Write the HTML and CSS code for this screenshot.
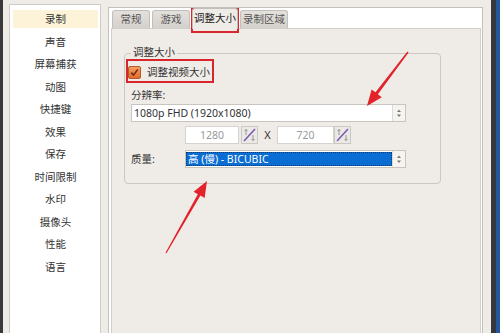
FILE: index.html
```html
<!DOCTYPE html>
<html lang="zh-CN">
<head>
<meta charset="utf-8">
<title>调整大小</title>
<link rel="stylesheet" href="styles.css">
</head>
<body>
<div class="screen">
  <div class="edge-l"></div>
  <div class="win">
    <nav class="side">
      <div class="item current">录制</div>
      <div class="item">声音</div>
      <div class="item">屏幕捕获</div>
      <div class="item">动图</div>
      <div class="item">快捷键</div>
      <div class="item">效果</div>
      <div class="item">保存</div>
      <div class="item">时间限制</div>
      <div class="item">水印</div>
      <div class="item">摄像头</div>
      <div class="item">性能</div>
      <div class="item">语言</div>
    </nav>
    <div class="tabs">
      <div class="tabbar">
        <div class="tab t2">常规</div>
        <div class="tab t2">游戏</div>
        <div class="tab t4 active">调整大小</div>
        <div class="tab t4b">录制区域</div>
      </div>
      <div class="pane">
        <fieldset class="group">
          <legend>调整大小</legend>
          <div class="chk-row">
            <span class="chk"><svg width="13" height="13" viewBox="0 0 13 13"><defs><linearGradient id="og" x1="0" y1="0" x2="0" y2="1"><stop offset="0" stop-color="#f4a266"/><stop offset="1" stop-color="#e0692c"/></linearGradient></defs><rect x="0.5" y="0.5" width="12" height="12" rx="1.5" fill="url(#og)" stroke="#b9592a"/><path d="M3.2 6.6 L5.5 9 L9.8 3.6" fill="none" stroke="#7a2e0c" stroke-width="1.6"/></svg></span>
            <span class="chk-lbl">调整视频大小</span>
          </div>
          <div class="lbl">分辨率:</div>
          <div class="sel sel-wide">
            <span class="val">1080p FHD (1920x1080)</span>
            <span class="spin"><svg width="12" height="16" viewBox="0 0 12 16"><polygon points="4,7 6,4.5 8,7" fill="#777"/><polygon points="4,9.5 6,12 8,9.5" fill="#777"/></svg></span>
          </div>
          <div class="size-row">
            <div class="num n1">1280</div>
            <div class="lockbtn"><svg width="15" height="16" viewBox="0 0 15 16"><line x1="2" y1="14" x2="13" y2="2" stroke="#7c58b0" stroke-width="1.6"/><path d="M4 8 V2.5 M2.5 4 L4 2.5 L5.5 4" fill="none" stroke="#8a8a8a" stroke-width="0.9"/><path d="M11 8 V13.5 M9.5 12 L11 13.5 L12.5 12" fill="none" stroke="#8a8a8a" stroke-width="0.9"/></svg></div>
            <div class="x">X</div>
            <div class="num n2">720</div>
            <div class="lockbtn"><svg width="15" height="16" viewBox="0 0 15 16"><line x1="2" y1="14" x2="13" y2="2" stroke="#7c58b0" stroke-width="1.6"/><path d="M4 8 V2.5 M2.5 4 L4 2.5 L5.5 4" fill="none" stroke="#8a8a8a" stroke-width="0.9"/><path d="M11 8 V13.5 M9.5 12 L11 13.5 L12.5 12" fill="none" stroke="#8a8a8a" stroke-width="0.9"/></svg></div>
          </div>
          <div class="q-row">
            <div class="lbl q">质量:</div>
            <div class="sel sel-q">
              <span class="val hl">高 (慢) - BICUBIC</span>
              <span class="spin"><svg width="12" height="16" viewBox="0 0 12 16"><polygon points="4,7 6,4.5 8,7" fill="#777"/><polygon points="4,9.5 6,12 8,9.5" fill="#777"/></svg></span>
            </div>
          </div>
        </fieldset>
      </div>
    </div>
  </div>
  <div class="edge-r"><div class="dark"></div><div class="blue"></div></div>
</div>
<svg class="annot" width="500" height="333" viewBox="0 0 500 333">
  <rect x="192" y="9" width="46" height="23" fill="none" stroke="#d8262c" stroke-width="2"/>
  <rect x="127" y="60" width="86" height="22" fill="none" stroke="#d8262c" stroke-width="2"/>
  <polygon points="408.6,52.4 377.9,94.2 381.8,97.2 367,106 371.6,89.4 375.5,92.3 407.4,51.6" fill="#e3232b"/>
  <polygon points="166.5,253.3 200.4,195.6 204.6,198.1 207,181 193.6,191.7 197.8,194.2 165.5,252.7" fill="#e3232b"/>
</svg>
</body>
</html>
```

FILE: styles.css
```css
html, body {
  margin: 0;
  padding: 0;
}
body {
  width: 500px;
  height: 333px;
  overflow: hidden;
  background: #efebe7;
  font-family: "Noto Sans", "Noto Sans CJK SC", sans-serif;
  font-size: 10.5px;
  color: #333;
  position: relative;
}
.screen {
  display: flex;
  height: 333px;
  overflow: hidden;
}
.edge-l {
  width: 3px;
  background: #3a3a3a;
  flex: none;
}
.win {
  width: 480px;
  flex: none;
  display: flex;
  align-items: flex-start;
  padding-left: 6px;
  box-sizing: border-box;
}
.side {
  margin-top: 4px;
  width: 92px;
  height: 360px;
  box-sizing: border-box;
  flex: none;
  background: #fff;
  border: 1px solid #cfcbc6;
  padding: 5px 2px 0 3px;
}
.item {
  height: 18px;
  line-height: 18px;
  margin-bottom: 4.5px;
  text-align: center;
  color: #333;
}
.item.current {
  background: #fcf3d8;
}
.tabs {
  margin-left: 7px;
  margin-top: 7px;
  width: 375px;
  height: 340px;
  box-sizing: border-box;
  flex: none;
  border: 1px solid #c4c0bb;
  background: #fff;
  display: flex;
  flex-direction: column;
}
.tabbar {
  height: 20px;
  display: flex;
  align-items: flex-end;
  padding-left: 3px;
  gap: 2px;
  flex: none;
}
.tab {
  height: 18px;
  line-height: 17px;
  box-sizing: border-box;
  text-align: center;
  color: #555;
  background: linear-gradient(#e4e1dd, #d4d0cb);
  border: 1px solid #c2beb9;
  border-bottom: none;
  border-radius: 3px 3px 0 0;
}
.t2 { width: 38px; }
.t4 { width: 46px; }
.t4b { width: 48px; }
.tab.active {
  height: 21px;
  line-height: 19px;
  margin-bottom: -1px;
  background: #efebe7;
  color: #222;
  position: relative;
  z-index: 1;
}
.pane {
  flex: 1;
  margin: 0 1px 0 2px;
  border: 1px solid #d2cec9;
  background: #efebe7;
  padding: 0;
}
.group {
  margin: 16px 0 0 12px;
  width: 317px;
  box-sizing: border-box;
  border: 1px solid #cbc7c2;
  border-radius: 4px;
  padding: 0 33px 15px 6px;
  min-width: 0;
}
.group legend {
  padding: 0 2px 2px;
  line-height: 14px;
  color: #333;
}
.chk-row {
  margin: 5px 0 0 -3px;
  display: flex;
  align-items: center;
  height: 13px;
}
.chk {
  width: 13px;
  height: 13px;
  display: block;
}
.chk svg { display: block; }
.chk-lbl {
  margin-left: 6px;
  line-height: 13px;
}
.lbl {
  margin-top: 9px;
  line-height: 14px;
}
.sel {
  display: flex;
  height: 18px;
  box-sizing: border-box;
  border: 1px solid #c8c4bf;
  background: #fff;
}
.sel-wide {
  margin-top: 2px;
  width: 275px;
}
.val {
  flex: 1;
  padding-left: 2px;
  line-height: 16px;
  white-space: nowrap;
  overflow: hidden;
}
.spin {
  width: 13px;
  box-sizing: border-box;
  border-left: 1px solid #dedad5;
  background: #f6f4f1;
  display: flex;
  align-items: center;
  justify-content: center;
}
.spin svg { display: block; }
.size-row {
  margin: 4px 0 0 54px;
  display: flex;
  height: 18px;
}
.num {
  height: 18px;
  box-sizing: border-box;
  border: 1px solid #d6d2cd;
  background: #fff;
  color: #9a9a9a;
  text-align: center;
  line-height: 16px;
}
.n1 { width: 54px; margin-right: 2px; }
.n2 { width: 57px; }
.lockbtn {
  width: 17px;
  height: 18px;
  box-sizing: border-box;
  border: 1px solid #cbc7c2;
  background: #ebe9e6;
  display: flex;
  align-items: center;
  justify-content: center;
}
.lockbtn svg { display: block; }
.x {
  width: 19px;
  text-align: center;
  line-height: 18px;
  font-size: 11px;
  color: #333;
}
.q-row {
  margin-top: 6px;
  display: flex;
  height: 18px;
}
.lbl.q {
  margin-top: 0;
  width: 54px;
  line-height: 18px;
}
.sel-q {
  width: 221px;
}
.val.hl {
  margin: 1px 0 1px 0;
  background: #0a6dd3;
  color: #fff;
  border: 1px dotted #123a6a;
  line-height: 12px;
  padding-left: 1px;
}
.edge-r {
  flex: 1;
  display: flex;
  justify-content: flex-end;
}
.edge-r .dark {
  width: 5px;
  background: #34373c;
}
.edge-r .blue {
  width: 4px;
  background: #24549a;
}
.annot {
  position: absolute;
  left: 0;
  top: 0;
  pointer-events: none;
}
```
